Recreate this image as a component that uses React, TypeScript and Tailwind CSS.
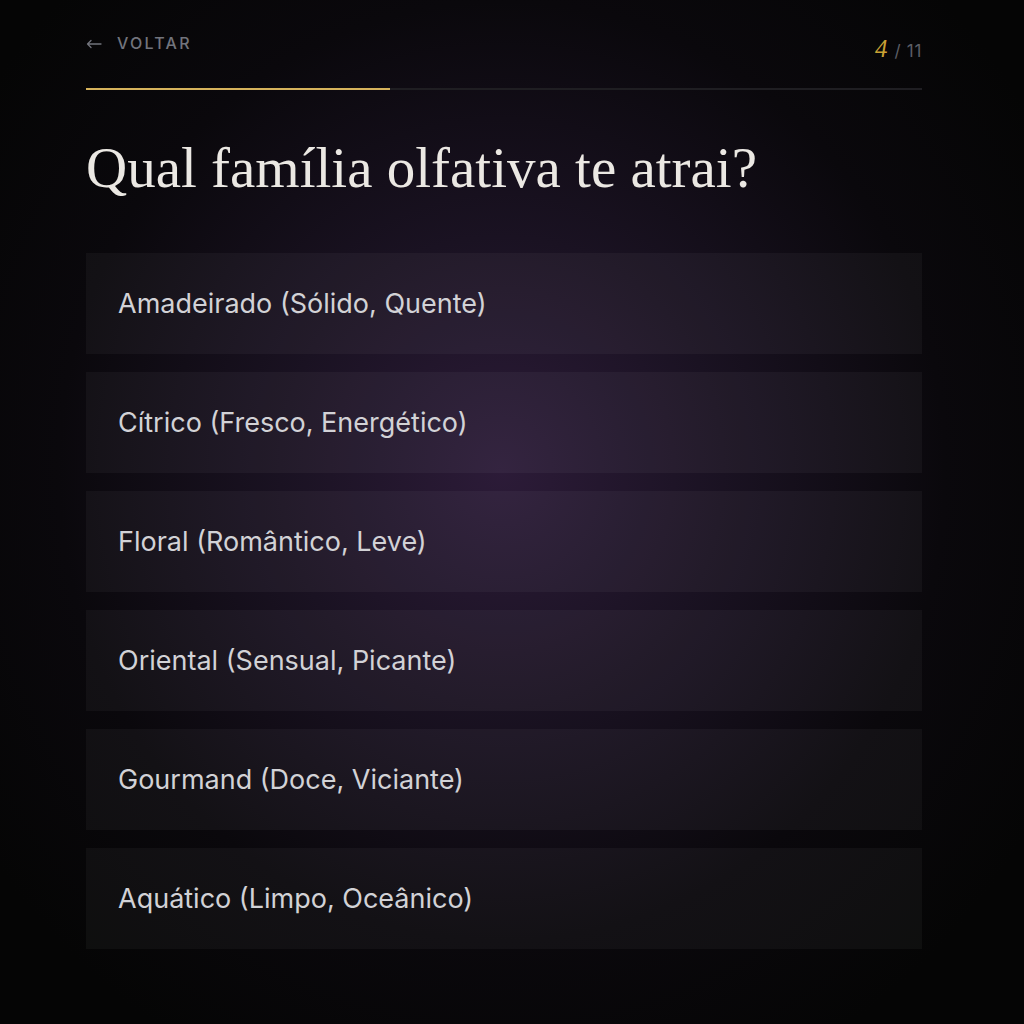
import React from "react";

const options = [
  "Amadeirado (Sólido, Quente)",
  "Cítrico (Fresco, Energético)",
  "Floral (Romântico, Leve)",
  "Oriental (Sensual, Picante)",
  "Gourmand (Doce, Viciante)",
  "Aquático (Limpo, Oceânico)",
];

export default function App() {
  const step = 4;
  const total = 11;

  return (
    <div className="min-h-screen w-full bg-[#060507] bg-[radial-gradient(ellipse_at_49%_46%,#2c1b38_0%,#1a1222_30%,#0a080c_60%,#050505_85%)] font-['Inter',sans-serif]">
      <div className="ml-[86px] w-[836px] pt-[35px]">
        {/* Top bar */}
        <div className="flex items-start justify-between">
          <button className="flex h-[16px] items-center gap-[15px] text-[16px] font-medium leading-none tracking-[0.14em] text-[#72747c]">
            <svg width="16" height="10" viewBox="0 0 16 10" fill="none" className="mt-[1px]">
              <path d="M15 5H1.5M5 1.5L1.5 5L5 8.5" stroke="currentColor" strokeWidth="1.3" strokeLinecap="round" strokeLinejoin="round" />
            </svg>
            <span>VOLTAR</span>
          </button>
          <div className="flex items-baseline gap-[7px] pt-[1px] leading-none">
            <span className="font-['Liberation_Serif',serif] text-[25px] italic leading-none text-[#c9a134]">
              {step}
            </span>
            <span className="text-[17px] leading-none tracking-[0.04em] text-[#5c5e66]">/ {total}</span>
          </div>
        </div>

        {/* Progress */}
        <div className="mt-[27px] h-[2px] w-full bg-[#1f1e22]">
          <div
            className="h-full bg-[#d6b35c]"
            style={{ width: `${(step / total) * 100}%` }}
          />
        </div>

        {/* Question */}
        <h1 className="mt-[44px] font-['Liberation_Serif',serif] text-[57px] leading-[1.2] text-[#ebe8e3]">
          Qual família olfativa te atrai?
        </h1>

        {/* Options */}
        <div className="mt-[51px] flex flex-col gap-[18px]">
          {options.map((o) => (
            <button
              key={o}
              className="flex h-[101px] w-full items-center bg-white/[0.038] px-8 text-left text-[27px] text-[#d2d2d6]"
            >
              {o}
            </button>
          ))}
        </div>
      </div>
    </div>
  );
}
